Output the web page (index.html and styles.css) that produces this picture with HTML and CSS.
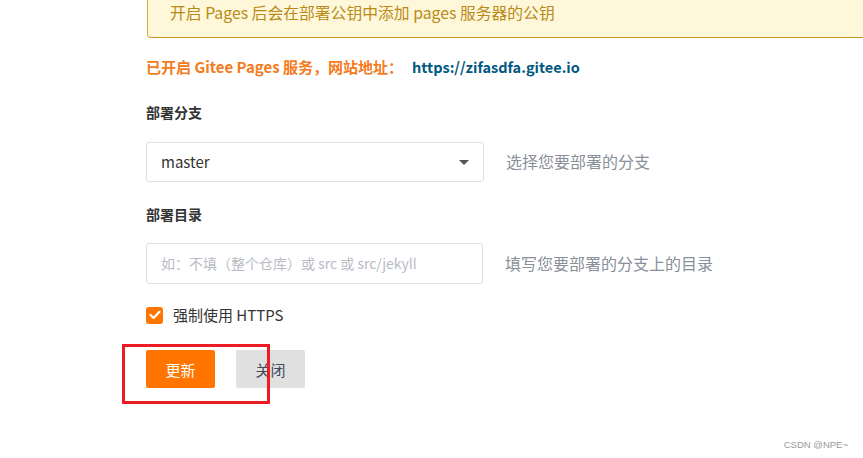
FILE: index.html
```html
<!DOCTYPE html>
<html lang="zh">
<head>
<meta charset="utf-8">
<link rel="stylesheet" href="styles.css">
</head>
<body>
<div class="page">
  <div class="notice">开启 Pages 后会在部署公钥中添加 pages 服务器的公钥</div>
  <div class="status"><span class="status-text">已开启 Gitee Pages 服务，网站地址：</span><a class="site-link" href="#">https://zifasdfa.gitee.io</a></div>

  <div class="label label-branch">部署分支</div>
  <div class="field-row">
    <div class="select"><span>master</span><span class="caret"></span></div>
    <span class="hint">选择您要部署的分支</span>
  </div>

  <div class="label label-dir">部署目录</div>
  <div class="field-row field-row-dir">
    <div class="input"><span class="placeholder">如：不填（整个仓库）或 src 或 src/jekyll</span></div>
    <span class="hint">填写您要部署的分支上的目录</span>
  </div>

  <div class="check-row">
    <span class="checkbox"><svg width="12" height="10" viewBox="0 0 12 10"><path d="M1.5 5 L4.6 8 L10.5 1.8" fill="none" stroke="#fff" stroke-width="2.2" stroke-linecap="round" stroke-linejoin="round"/></svg></span>
    <span class="check-label">强制使用 HTTPS</span>
  </div>

  <div class="actions">
    <button class="btn btn-primary">更新</button>
    <button class="btn btn-default">关闭</button>
    <div class="highlight"></div>
  </div>
</div>
<div class="watermark">CSDN @NPE~</div>
</body>
</html>
```
FILE: styles.css
```css
html, body {
  margin: 0;
  padding: 0;
  background: #fff;
  height: 100%;
  overflow: hidden;
}
body {
  font-family: "Noto Sans CJK SC", "Open Sans", sans-serif;
  font-size: 14px;
  color: #333;
  position: relative;
}
.page {
  padding-left: 146px;
}
.notice {
  margin-top: -12px;
  margin-left: 1px;
  padding: 13px 22px;
  line-height: 22px;
  font-size: 15.8px;
  color: #b98a17;
  background: #fef7da;
  border: 1px solid #d6aa3a;
  border-bottom-color: #c8961e;
  border-right: none;
  border-radius: 4px 0 0 4px;
}
.status {
  margin-top: 19px;
  line-height: 20px;
  font-size: 15px;
  font-weight: 700;
}
.status-text { color: #f47b20; }
.site-link {
  color: #005980;
  text-decoration: none;
  margin-left: 9px;
  font-size: 14.5px;
}
.label {
  font-weight: 700;
  line-height: 20px;
  color: #333;
}
.label-branch { margin-top: 25px; }
.label-dir { margin-top: 22px; }
.field-row {
  display: flex;
  align-items: center;
  margin-top: 20px;
}
.field-row-dir { margin-top: 19px; }
.select, .input {
  box-sizing: border-box;
  width: 338px;
  height: 40px;
  border: 1px solid #dcdfe6;
  border-radius: 3px;
  display: flex;
  align-items: center;
  padding: 0 14px 2px;
}
.input { height: 41px; width: 337px; }
.select { justify-content: space-between; color: #333; font-size: 15px; }
.caret {
  width: 0;
  height: 0;
  border-left: 5px solid transparent;
  border-right: 5px solid transparent;
  border-top: 5px solid #555;
  margin-top: 2px;
}
.placeholder { color: #b8bcc4; font-size: 14px; }
.hint {
  margin-left: 22px;
  color: #8a8f99;
  font-size: 16px;
  margin-top: -2px;
}
.check-row {
  display: flex;
  align-items: center;
  margin-top: 21px;
  height: 20px;
}
.checkbox {
  width: 17px;
  height: 17px;
  border-radius: 3px;
  background: #ff7500;
  display: flex;
  align-items: center;
  justify-content: center;
}
.check-label {
  margin-left: 10px;
  font-size: 15px;
  color: #333;
  margin-top: -1px;
}
.actions {
  position: relative;
  display: flex;
  gap: 21px;
  margin-top: 25px;
}
.btn {
  width: 69px;
  height: 38px;
  border: none;
  border-radius: 2px;
  font-family: inherit;
  font-size: 15px;
  padding: 0;
}
.btn-primary { background: #ff7500; color: #fff; }
.btn-default { background: #e0e0e0; color: #40485b; }
.highlight {
  position: absolute;
  left: -24px;
  top: -6px;
  width: 148px;
  height: 60px;
  box-sizing: border-box;
  border: 3px solid #ec1c24;
}
.watermark {
  position: absolute;
  right: 15px;
  bottom: 8px;
  font-size: 9.5px;
  color: #999;
  font-family: "Liberation Sans", sans-serif;
}
```
